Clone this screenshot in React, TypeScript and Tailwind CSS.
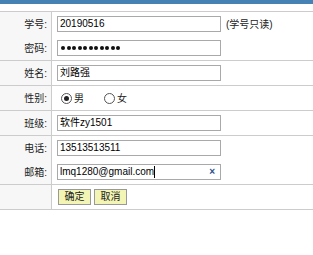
import React from "react";

function Row({ label, border = true, children }: { label: string; border?: boolean; children?: React.ReactNode }) {
  return (
    <div className={`flex h-[24px] ${border ? "box-content border-b border-[#cccccc]" : ""}`}>
      <div className="w-[52px] shrink-0 bg-[#f7f7f7] border-r border-[#cccccc] flex items-center justify-end pr-[4px] text-[10px] text-[#222]">
        {label}
      </div>
      <div className="flex items-center pl-[5px] flex-1">{children}</div>
    </div>
  );
}

function Box({ children }: { children?: React.ReactNode }) {
  return (
    <div className="w-[164px] h-[16px] border border-[#a9a9a9] bg-white flex items-center px-[2px] text-[10px] text-black leading-none whitespace-nowrap">
      {children}
    </div>
  );
}

function Radio({ checked }: { checked?: boolean }) {
  return (
    <span className="w-[11px] h-[11px] rounded-full border border-[#555] bg-white flex items-center justify-center">
      {checked && <span className="w-[5px] h-[5px] rounded-full bg-[#222]" />}
    </span>
  );
}

export default function App() {
  const dots = Array.from({ length: 11 });
  return (
    <div className="w-[313px] h-[255px] bg-white font-['Liberation_Sans','Noto_Sans_CJK_SC',sans-serif]">
      <div className="h-[4px] bg-[#4682b4]" />
      <div className="h-[7px]" />
      <div className="border-t border-[#cccccc]">
        <Row label="学号:" border={false}>
          <Box>20190516</Box>
          <span className="ml-[5px] text-[10px] text-[#222]">(学号只读)</span>
        </Row>
        <Row label="密码:">
          <Box>
            <span className="flex gap-[1.5px] pl-[1px]" aria-label="password">
              {dots.map((_, i) => (
                <span key={i} className="w-[4px] h-[4px] rounded-full bg-[#111]" />
              ))}
            </span>
          </Box>
        </Row>
        <Row label="姓名:">
          <Box>刘路强</Box>
        </Row>
        <Row label="性别:">
          <div className="flex items-center pl-[4px] text-[10px] text-[#222]">
            <Radio checked />
            <span className="ml-[2px]">男</span>
            <span className="ml-[20px]"><Radio /></span>
            <span className="ml-[2px]">女</span>
          </div>
        </Row>
        <Row label="班级:">
          <Box>软件zy1501</Box>
        </Row>
        <Row label="电话:" border={false}>
          <Box>13513513511</Box>
        </Row>
        <Row label="邮箱:">
          <Box>
            <span>lmq1280@gmail.com</span>
            <span className="w-[1px] h-[12px] bg-black" />
            <span className="ml-auto mr-[3px] text-[#2b4f8c] font-bold text-[10px]">×</span>
          </Box>
        </Row>
        <Row label="">
          <div className="flex gap-[3px] pl-[1px]">
            <button className="w-[33px] h-[16px] border border-[#999] bg-[#f2f5b4] text-[10px] text-[#222] leading-none">确定</button>
            <button className="w-[33px] h-[16px] border border-[#999] bg-[#f2f5b4] text-[10px] text-[#222] leading-none">取消</button>
          </div>
        </Row>
      </div>
    </div>
  );
}
